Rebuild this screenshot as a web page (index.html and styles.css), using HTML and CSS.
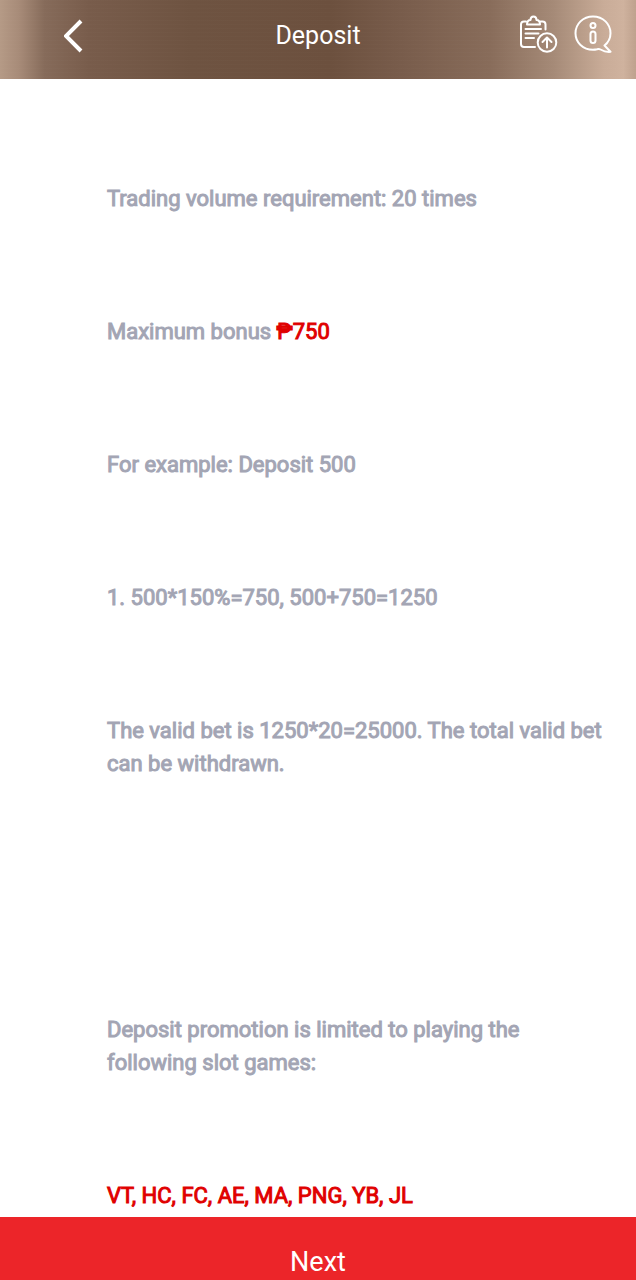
FILE: index.html
```html
<!DOCTYPE html>
<html lang="en">
<head>
    <meta charset="UTF-8">
    <meta name="viewport" content="width=device-width, initial-scale=1.0">
    <title>Deposit</title>
    <link rel="stylesheet" href="styles.css">
</head>
<body>
    <header class="header">
        <a class="back" href="#" aria-label="Back">
            <svg width="20" height="34" viewBox="0 0 20 34">
                <path d="M17 2 2 17l15 15" fill="none" stroke="#fff" stroke-width="4"/>
            </svg>
        </a>
        <h1 class="title">Deposit</h1>
        <div class="actions">
            <a href="#" aria-label="Deposit record">
                <svg width="38" height="38" viewBox="0 0 38 38" fill="none" stroke="#fff" stroke-width="2" stroke-linecap="round" stroke-linejoin="round">
                    <path d="M6 6.500H4Q1 6.500 1 9.500V29Q1 32 4 32H15M20.500 6.500H22.500Q25.500 6.500 25.500 9.500V14.500"/>
                    <path d="M7 9.500q0-4.500 3.500-4.500 0-3.500 3-3.500t3 3.500q3.500 0 3.500 4.500Z"/>
                    <path d="M5.500 14h15.500M5.500 18.500h13M5.500 23h8.500"/>
                    <circle cx="27" cy="27.500" r="9.300"/>
                    <path d="M27 32.500V22.500M22.500 27l4.500-4.500 4.500 4.500"/>
                </svg>
            </a>
            <a href="#" aria-label="Help">
                <svg width="38" height="38" viewBox="0 0 38 38" fill="none" stroke="#fff" stroke-width="2" stroke-linecap="round" stroke-linejoin="round">
                    <path d="M30.500 30.500 36.500 36.800Q31.500 37.300 26.500 34.500 25 33.700 23 34.300 21 34.800 19 34.800C9 34.800 1.500 27.500 1.500 18.200S9 1.500 19 1.500 36.500 9 36.500 18.200Q36.500 25.500 30.500 30.500Z"/>
                    <circle cx="19" cy="10.500" r="2.500"/>
                    <rect x="16.500" y="16.500" width="5" height="11.500" rx="2.500"/>
                </svg>
            </a>
        </div>
    </header>

    <main class="content">
        <p>Trading volume requirement: 20 times</p>
        <p>Maximum bonus <span class="red">₱750</span></p>
        <p>For example: Deposit 500</p>
        <p>1. 500*150%=750, 500+750=1250</p>
        <p>The valid bet is 1250*20=25000. The total valid bet can be withdrawn.</p>
        <p>&nbsp;</p>
        <p>Deposit promotion is limited to playing the following slot games:</p>
        <p class="red">VT, HC, FC, AE, MA, PNG, YB, JL</p>
    </main>

    <button class="next" type="button">Next</button>
</body>
</html>
```

FILE: styles.css
```css
* {
    box-sizing: border-box;
}
body {
    display: flex;
    flex-direction: column;
    min-height: 100vh;
    margin: 0;
    font-family: Roboto, "Liberation Sans", sans-serif;
    background-color: #fff;
}
.header {
    display: grid;
    grid-template-columns: 1fr auto 1fr;
    align-items: center;
    height: 79px;
    padding: 0 24px 7px 64px;
    /* brushed bronze */
    background:
        repeating-linear-gradient(rgba(255, 255, 255, 0.01) 0 1px, transparent 1px 4px),
        linear-gradient(90deg, #b59a86 0%, #a78b78 3%, #866b5a 7%, #785c4b 14%, #6e5341 30%, #6c503e 52%, #785c4b 63%, #886c5a 77%, #a58a77 87%, #c9ac98 95%, #cfb29e 98%, #bea18d 100%);
}
.header a {
    display: block;
}
.header svg {
    display: block;
}
.back {
    justify-self: start;
}
.title {
    margin: 0 40px 0 0;
    color: #fff;
    font-size: 25px;
    font-weight: 400;
    line-height: 32px;
}
.actions {
    display: flex;
    gap: 16px;
    justify-self: end;
    padding-bottom: 4px;
}
.content {
    flex: 1;
    padding: 103px 24px 0 107px;
    color: #a3a5b4;
    font-size: 22px;
    line-height: 33px;
    /* thickens the regular weight, keeps its widths */
    -webkit-text-stroke: 1px currentColor;
}
.content p {
    margin: 0;
}
.content p + p {
    margin-top: 100px;
}
.content .red {
    color: #e00000;
}
.next {
    width: 100%;
    padding: 29px 0 1px;
    border: none;
    color: #fff;
    font-family: inherit;
    font-size: 27px;
    line-height: 33px;
    background-color: #ec2529;
}
```
